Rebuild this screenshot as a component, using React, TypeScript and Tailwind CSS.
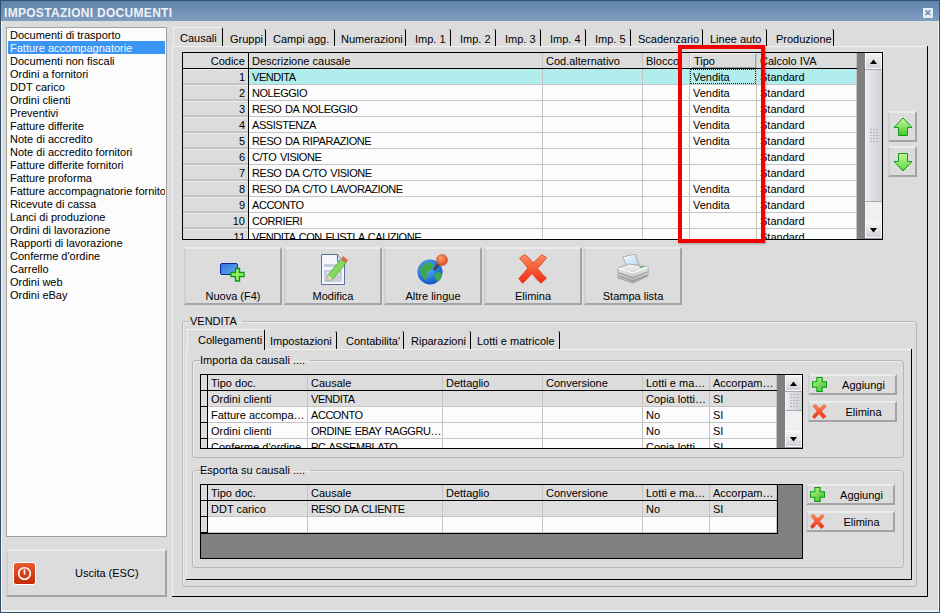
import type { ReactNode } from "react"

const docs = [
  "Documenti di trasporto",
  "Fatture accompagnatorie",
  "Documenti non fiscali",
  "Ordini a fornitori",
  "DDT carico",
  "Ordini clienti",
  "Preventivi",
  "Fatture differite",
  "Note di accredito",
  "Note di accredito fornitori",
  "Fatture differite fornitori",
  "Fatture proforma",
  "Fatture accompagnatorie fornitori",
  "Ricevute di cassa",
  "Lanci di produzione",
  "Ordini di lavorazione",
  "Rapporti di lavorazione",
  "Conferme d'ordine",
  "Carrello",
  "Ordini web",
  "Ordini eBay"
]

const topTabs = [
  { label: "Causali", w: "w-[50px]", pl: "pl-[6px]" },
  { label: "Gruppi", w: "w-[43px]", pl: "pl-[7px]" },
  { label: "Campi agg.", w: "w-[69px]", pl: "pl-[7px]" },
  { label: "Numerazioni", w: "w-[71px]", pl: "pl-[6px]" },
  { label: "Imp. 1", w: "w-[45px]", pl: "pl-[9px]" },
  { label: "Imp. 2", w: "w-[45px]", pl: "pl-[9px]" },
  { label: "Imp. 3", w: "w-[45px]", pl: "pl-[9px]" },
  { label: "Imp. 4", w: "w-[45px]", pl: "pl-[9px]" },
  { label: "Imp. 5", w: "w-[45px]", pl: "pl-[9px]" },
  { label: "Scadenzario", w: "w-[72px]", pl: "pl-[7px]" },
  { label: "Linee auto", w: "w-[64px]", pl: "pl-[7px]" },
  { label: "Produzione", w: "w-[67px]", pl: "pl-[9px]" }
]

const innerTabs = [
  { label: "Collegamenti", w: "w-[78px]", pl: "pl-[10px]" },
  { label: "Impostazioni", w: "w-[72px]", pl: "pl-[5px]" },
  { label: "Contabilita'", w: "w-[67px]", pl: "pl-[9px]" },
  { label: "Riparazioni", w: "w-[67px]", pl: "pl-[7px]" },
  { label: "Lotti e matricole", w: "w-[89px]", pl: "pl-[6px]" }
]

const mainCols = [
  { label: "Codice", w: "w-[66px]" },
  { label: "Descrizione causale", w: "w-[294px]" },
  { label: "Cod.alternativo", w: "w-[100px]" },
  { label: "Blocco", w: "w-[47px]" },
  { label: "Tipo", w: "w-[67px]" },
  { label: "Calcolo IVA", w: "w-[100px]" }
]

const mainRows = [
  ["1", "VENDITA", "", "", "Vendita", "Standard"],
  ["2", "NOLEGGIO", "", "", "Vendita", "Standard"],
  ["3", "RESO DA NOLEGGIO", "", "", "Vendita", "Standard"],
  ["4", "ASSISTENZA", "", "", "Vendita", "Standard"],
  ["5", "RESO DA RIPARAZIONE", "", "", "Vendita", "Standard"],
  ["6", "C/TO VISIONE", "", "", "", "Standard"],
  ["7", "RESO DA C/TO VISIONE", "", "", "", "Standard"],
  ["8", "RESO DA C/TO LAVORAZIONE", "", "", "Vendita", "Standard"],
  ["9", "ACCONTO", "", "", "Vendita", "Standard"],
  ["10", "CORRIERI", "", "", "", "Standard"],
  ["11", "VENDITA CON FUSTI A CAUZIONE", "", "", "", "Standard"]
]

const linkCols = [
  { label: "", w: "w-[7px]" },
  { label: "Tipo doc.", w: "w-[100px]" },
  { label: "Causale", w: "w-[135px]" },
  { label: "Dettaglio", w: "w-[100px]" },
  { label: "Conversione", w: "w-[100px]" },
  { label: "Lotti e ma…", w: "w-[67px]" },
  { label: "Accorpam…", w: "w-[67px]" }
]

const importRows = [
  ["", "Ordini clienti", "VENDITA", "", "", "Copia lotti…", "SI"],
  ["", "Fatture accompa…", "ACCONTO", "", "", "No", "SI"],
  ["", "Ordini clienti", "ORDINE EBAY RAGGRU…", "", "", "No", "SI"],
  ["", "Conferme d'ordine", "PC ASSEMBLATO", "", "", "Copia lotti…", "SI"]
]

const exportRows = [
  ["", "DDT carico", "RESO DA CLIENTE", "", "", "No", "SI"],
  ["", "", "", "", "", "", ""]
]

// Capitals run narrower in the original UI font
const isCaps = (s: string) => s.length > 2 && s === s.toUpperCase()

function Grid({
  cols,
  rows,
  firstRowBg,
  numbered,
  focusCol
}: {
  cols: { label: string; w: string }[]
  rows: string[][]
  firstRowBg: string
  numbered?: boolean
  focusCol?: number
}) {
  return (
    <div className="flex flex-col">
      <div className="flex h-4 border-b border-black bg-[#dcdcdc]">
        {cols.map((c, i) => (
          <div
            key={i}
            className={`${c.w} flex-none overflow-hidden whitespace-nowrap ${
              i === 0 ? "border-r border-black pr-[3px] text-right" : "border-r border-[#c4c4c4] pl-[3px]"
            } ${
              focusCol === i
                ? "border-l border-t border-l-[#f4f4f4] border-t-[#f4f4f4] leading-[14px] shadow-[inset_-1px_-1px_0_#a0a0a0]"
                : "leading-[16px]"
            }`}
          >
            {c.label}
          </div>
        ))}
      </div>
      {rows.map((r, ri) => (
        <div key={ri} className={`flex h-4 flex-none ${ri === 0 ? firstRowBg : "bg-[#fcfcfc]"}`}>
          {cols.map((c, i) => (
            <div
              key={i}
              className={`${c.w} flex-none overflow-hidden whitespace-nowrap leading-[16px] ${
                isCaps(r[i]) ? "tracking-[-0.45px] [word-spacing:1px]" : ""
              } ${
                i === 0
                  ? `border-r border-black bg-[#dcdcdc] pr-[3px] text-right ${
                      numbered ? "shadow-[inset_0_1px_0_#ececec,inset_0_-2px_0_#c4c4c4]" : "border-b border-[#c0c0c0]"
                    }`
                  : "border-b border-r border-[#c4c4c4] pl-[3px]"
              }`}
            >
              {focusCol === i && ri === 0 ? (
                <span className="-ml-[3px] block h-[15px] border border-dotted border-[#222] pl-[2px] leading-[14px]">
                  {r[i]}
                </span>
              ) : (
                r[i]
              )}
            </div>
          ))}
        </div>
      ))}
    </div>
  )
}

function ScrollArrow({ down }: { down?: boolean }) {
  return (
    <div className="flex h-4 flex-none items-center justify-center rounded-[1px] border border-[#fafafa] bg-gradient-to-b from-[#f2f2f4] to-[#d2d2d8] shadow-[0_1px_0_#909090]">
      <svg width="9" height="5" viewBox="0 0 9 5">
        <path d={down ? "M1 0h7L4.5 4.5z" : "M4.5 0.5L8 5H1z"} fill="#000" />
      </svg>
    </div>
  )
}

function Grip() {
  return (
    <div className="grid grid-cols-3 gap-x-[1px] gap-y-[2px]">
      {Array.from({ length: 15 }).map((_, i) => (
        <span key={i} className="h-[1px] w-[2px] bg-[#b4b4bc]" />
      ))}
    </div>
  )
}

function Scrollbar({ thumb, track, gripPos }: { thumb: string; track: string; gripPos: string }) {
  return (
    <div className="flex h-full w-[17px] flex-none flex-col bg-[#f0f0f2]">
      <ScrollArrow />
      <div
        className={`${thumb} flex flex-none flex-col items-center overflow-hidden rounded-[1px] border-y border-[#a8a8ac] bg-gradient-to-r from-[#eeeef2] via-[#dcdce2] to-[#cfcfd6] ${gripPos}`}
      >
        <Grip />
      </div>
      <div className={`${track} flex-none bg-[#f0f0f2]`} />
      <ScrollArrow down />
    </div>
  )
}

function Tab({ label, w, pl, active }: { label: string; w: string; pl: string; active?: boolean }) {
  return (
    <div
      className={`${w} ${pl} flex-none whitespace-nowrap rounded-tr-[2px] border-r border-black ${
        active
          ? "mb-[-1px] border-l border-t border-l-[#f0f0f0] border-t-[#f0f0f0] bg-[#dcdcdc] leading-[20px]"
          : "mt-[2px] leading-[21px]"
      }`}
    >
      {label}
    </div>
  )
}

function Group({ title, className, children }: { title: string; className: string; children: ReactNode }) {
  return (
    <fieldset className={`${className} rounded-[3px] border border-[#b8b8b8] shadow-[inset_1px_1px_0_#ececec]`}>
      <legend className="ml-[7px] h-[13px] px-0 pr-[5px] leading-[13px]">{title}</legend>
      {children}
    </fieldset>
  )
}

function RaisedButton({ className, children }: { className: string; children: ReactNode }) {
  return (
    <div
      className={`${className} border-2 border-b-[#a4a4a4] border-l-[#d0d0d0] border-r-[#a4a4a4] border-t-[#ececec] bg-[#dcdcdc]`}
    >
      {children}
    </div>
  )
}

function PlusIcon({ size = 14 }: { size?: number }) {
  return (
    <svg width={size} height={size} viewBox="0 0 14 14">
      <defs>
        <linearGradient id="plusg" x1="0" y1="0" x2="1" y2="1">
          <stop offset="0" stopColor="#b8f58a" />
          <stop offset="1" stopColor="#3fc02a" />
        </linearGradient>
      </defs>
      <path d="M4.5.5h5v4h4v5h-4v4h-5v-4h-4v-5h4z" fill="url(#plusg)" stroke="#0a9a14" />
    </svg>
  )
}

function CrossIcon({ size = 14 }: { size?: number }) {
  return (
    <svg width={size} height={size} viewBox="0 0 40 40">
      <defs>
        <linearGradient id="crossg" x1="0" y1="0" x2="0" y2="1">
          <stop offset="0" stopColor="#ff8a5c" />
          <stop offset="1" stopColor="#f02a10" />
        </linearGradient>
      </defs>
      <path
        d="M8 1c4 1 7 4 12 11 5-4 8-8 12-11l6 4c-3 4-7 9-12 14 4 5 8 10 12 13l-7 7c-4-3-8-7-12-13-5 5-9 10-13 13l-5-6c3-4 8-9 12-14C9 13 5 9 2 6z"
        fill="url(#crossg)"
        stroke="#d83818"
        strokeWidth="1"
      />
    </svg>
  )
}

function NewIcon() {
  return (
    <svg width="26" height="20" viewBox="0 0 26 20">
      <defs>
        <linearGradient id="newb" x1="0" y1="0" x2="1" y2="1">
          <stop offset="0" stopColor="#2f74dc" />
          <stop offset="1" stopColor="#6ea8f0" />
        </linearGradient>
      </defs>
      <rect x=".5" y=".5" width="17" height="11" rx="1.5" fill="url(#newb)" stroke="#0d2a9c" />
      <path
        d="M15.500 5.500h4v4h4.500v4h-4.500v4.500h-4v-4.500h-4.500v-4h4.500z"
        fill="#9cf06c"
        stroke="#0a9a14"
        strokeWidth="1.400"
      />
    </svg>
  )
}

function EditIcon() {
  return (
    <svg width="28" height="31" viewBox="0 0 28 31">
      <path d="M.5.5h16l7 7v23h-23z" fill="#f4f6fb" stroke="#5a6ea0" />
      <path d="M16.500.5v7h7" fill="#cfd8ee" stroke="#5a6ea0" />
      <rect x="3" y="10" width="17" height="3" fill="#c4cce0" />
      <rect x="3" y="16" width="18" height="12" fill="#c7cede" />
      <rect x="6" y="18" width="12" height="3" fill="#e4e8f2" />
      <path d="M7 21L20 5l5 4-13 16-6 2z" fill="#86d860" stroke="#4ca83a" strokeWidth=".8" />
      <path d="M20 5l2-3 5 4-2 3z" fill="#e46a52" />
      <path d="M7 21l5 4-6 2z" fill="#e8d4b8" />
    </svg>
  )
}

function GlobeIcon() {
  return (
    <svg width="32" height="31" viewBox="0 0 32 31">
      <defs>
        <radialGradient id="globe" cx=".4" cy=".35" r=".7">
          <stop offset="0" stopColor="#5bb4ff" />
          <stop offset="1" stopColor="#0d4fc4" />
        </radialGradient>
        <radialGradient id="pin" cx=".4" cy=".35" r=".7">
          <stop offset="0" stopColor="#f8a070" />
          <stop offset="1" stopColor="#d84a20" />
        </radialGradient>
      </defs>
      <circle cx="13" cy="18" r="12.500" fill="url(#globe)" />
      <path d="M3 14l7-6 6 2-1 6-5 2 1 6-3 2-4-6zM17 20l5-2 3 2-2 6-4 1z" fill="#3fa84a" />
      <path d="M17 16l6-8" stroke="#44444c" strokeWidth="3" />
      <circle cx="25" cy="6" r="5.500" fill="url(#pin)" stroke="#d85428" strokeWidth=".6" />
    </svg>
  )
}

function PrinterIcon() {
  return (
    <svg width="32" height="30" viewBox="0 0 32 30">
      <defs>
        <linearGradient id="paper" x1="0" y1="0" x2="1" y2="1">
          <stop offset="0" stopColor="#ffffff" />
          <stop offset="1" stopColor="#a8d0f4" />
        </linearGradient>
        <linearGradient id="body" x1="0" y1="0" x2="0" y2="1">
          <stop offset="0" stopColor="#f6f6f6" />
          <stop offset="1" stopColor="#b4b4b4" />
        </linearGradient>
      </defs>
      <path d="M6 3l12-3 4 11-11 4z" fill="url(#paper)" stroke="#8a8a8a" strokeWidth=".6" />
      <path d="M1 14l11-4 19 3v9l-15 7-15-5z" fill="url(#body)" stroke="#8c8c8c" strokeWidth=".7" />
      <path d="M1 14l15 5 15-6" fill="none" stroke="#ffffff" />
      <path d="M2 19l14 5 14-6M2 22l14 5 14-6" fill="none" stroke="#7c7c7c" strokeWidth=".8" />
      <path d="M22 13l4-1 1 1-4 1z" fill="#42b04a" />
    </svg>
  )
}

function ArrowIcon({ down }: { down?: boolean }) {
  return (
    <svg width="20" height="20" viewBox="0 0 20 20" className={down ? "rotate-180" : ""}>
      <defs>
        <linearGradient id={down ? "arrd" : "arru"} x1="0" y1="0" x2="0" y2="1">
          <stop offset="0" stopColor={down ? "#58d83a" : "#d4fca8"} />
          <stop offset="1" stopColor={down ? "#c8f89c" : "#40c828"} />
        </linearGradient>
      </defs>
      <path d="M10 1l9 9.500h-4.500v8h-9v-8H1z" fill={`url(#${down ? "arrd" : "arru"})`} stroke="#179a18" />
    </svg>
  )
}

function PowerIcon() {
  return (
    <div className="flex h-[23px] w-[23px] items-center justify-center rounded-[3px] border border-white bg-gradient-to-b from-[#e85a30] to-[#c42a08]">
      <svg width="15" height="15" viewBox="0 0 15 15">
        <circle cx="7.500" cy="7.500" r="5.800" fill="none" stroke="#fff" strokeWidth="1.600" />
        <rect x="6.700" y="3.500" width="1.600" height="5" fill="#fff" />
      </svg>
    </div>
  )
}

function ToolButton({ icon, label, iconClass }: { icon: ReactNode; label: string; iconClass: string }) {
  return (
    <RaisedButton className="flex h-[58px] w-[98px] flex-none flex-col items-center">
      <div className={`flex h-[37px] flex-none items-start justify-center ${iconClass}`}>{icon}</div>
      <div className="mt-[4px] whitespace-nowrap leading-[13px]">{label}</div>
    </RaisedButton>
  )
}

function SideButton({ icon, label }: { icon: ReactNode; label: string }) {
  return (
    <RaisedButton className="flex h-[21px] w-[89px] items-center pl-[2px]">
      <span className="w-[20px] flex-none">{icon}</span>
      <span className="flex-1 text-center leading-[14px]">{label}</span>
    </RaisedButton>
  )
}

function SideButtons() {
  return (
    <div className="flex flex-col gap-[6px]">
      <SideButton icon={<PlusIcon size={15} />} label="Aggiungi" />
      <SideButton icon={<CrossIcon size={15} />} label="Elimina" />
    </div>
  )
}

export default function App() {
  return (
    <div className="relative flex h-[613px] w-[940px] flex-col overflow-hidden border border-[#34506e] bg-[#dcdcdc] font-['Liberation_Sans',sans-serif] text-[11px] text-black shadow-[inset_0_-2px_0_#f2f2f2,inset_-1px_0_0_#f2f2f2,inset_1px_0_0_#f2f2f2]">
      <div className="flex h-[20px] flex-none items-center justify-between bg-gradient-to-b from-[#5f83aa] to-[#7f9dbf] pl-[3px] pr-[6px] pt-[4px]">
        <span className="text-[12px] font-bold tracking-[.3px] text-[#eef2f8]">IMPOSTAZIONI DOCUMENTI</span>
        <span className="flex h-[10px] w-[10px] items-center justify-center bg-[#e8eef6] text-[9px] font-bold leading-none text-[#5f83aa]">
          ✕
        </span>
      </div>

      <div className="flex flex-1 pl-[5px] pt-[6px]">
        <div className="flex w-[161px] flex-none flex-col">
          <div className="h-[510px] overflow-hidden border border-[#a0a0a0] bg-[#fcfcfc] px-[1px] leading-[14px]">
            {docs.map((d) => (
              <div
                key={d}
                className={`h-[13px] overflow-hidden whitespace-nowrap pl-[2px] ${
                  d === "Fatture accompagnatorie" ? "bg-[#3a96f2] text-[#f4f8ff]" : ""
                }`}
              >
                {d}
              </div>
            ))}
          </div>
          <RaisedButton className="mt-[12px] flex h-[48px] items-center pl-[5px]">
            <PowerIcon />
            <span className="ml-[39px]">Uscita (ESC)</span>
          </RaisedButton>
        </div>

        <div className="ml-[5px] flex w-[756px] flex-none flex-col">
          <div className="flex h-[19px] flex-none pl-[1px]">
            {topTabs.map((t, i) => (
              <Tab key={t.label} {...t} active={i === 0} />
            ))}
          </div>

          <div className="h-[551px] flex-none border-b border-r border-black pl-[10px] pt-[6px] shadow-[inset_1px_1px_0_#f0f0f0]">
            <div className="flex">
              <div className="flex h-[188px] w-[701px] flex-none overflow-hidden border border-black bg-[#808080]">
                <div className="w-[674px] flex-none overflow-hidden">
                  <Grid cols={mainCols} rows={mainRows} firstRowBg="bg-[#b2eded]" numbered focusCol={4} />
                </div>
                <div className="w-[8px] flex-none" />
                <Scrollbar thumb="h-[133px]" track="h-[20px]" gripPos="justify-center" />
              </div>
              <div className="ml-[5px] mt-[59px] flex flex-col gap-[4px]">
                <RaisedButton className="flex h-[31px] w-[29px] items-center justify-center">
                  <ArrowIcon />
                </RaisedButton>
                <RaisedButton className="flex h-[31px] w-[29px] items-center justify-center">
                  <ArrowIcon down />
                </RaisedButton>
              </div>
            </div>

            <div className="ml-[2px] mt-[7px] flex gap-[2px]">
              <ToolButton icon={<NewIcon />} label="Nuova (F4)" iconClass="pt-[14px]" />
              <ToolButton icon={<EditIcon />} label="Modifica" iconClass="pl-[4px] pt-[5px]" />
              <ToolButton icon={<GlobeIcon />} label="Altre lingue" iconClass="pt-[5px]" />
              <ToolButton icon={<CrossIcon size={30} />} label="Elimina" iconClass="pt-[5px]" />
              <ToolButton icon={<PrinterIcon />} label="Stampa lista" iconClass="pt-[5px]" />
            </div>

            <Group title="VENDITA" className="mt-[10px] h-[272px] w-[735px]">
              <div className="pl-[3px] pt-[1px]">
                <div className="flex h-[20px] pl-[1px]">
                  {innerTabs.map((t, i) => (
                    <Tab key={t.label} {...t} active={i === 0} />
                  ))}
                </div>
                <div className="h-[231px] w-[726px] border-b border-r border-black pl-[6px] pt-[5px] shadow-[inset_1px_1px_0_#f0f0f0]">
                  <Group title="Importa da causali ...." className="h-[104px] w-[712px]">
                    <div className="ml-[7px] mt-[7px] flex">
                      <div className="flex h-[75px] w-[603px] flex-none overflow-hidden border border-black bg-[#808080]">
                        <div className="w-[576px] flex-none overflow-hidden">
                          <Grid cols={linkCols} rows={importRows} firstRowBg="bg-[#dedede]" />
                        </div>
                        <div className="w-[8px] flex-none" />
                        <Scrollbar thumb="h-[20px]" track="h-[20px]" gripPos="justify-start pt-[2px]" />
                      </div>
                      <div className="ml-[5px]">
                        <SideButtons />
                      </div>
                    </div>
                  </Group>
                  <Group title="Esporta su causali ...." className="mt-[6px] h-[104px] w-[712px]">
                    <div className="ml-[7px] mt-[7px] flex">
                      <div className="h-[75px] w-[603px] flex-none overflow-hidden border border-black bg-[#808080]">
                        <div className="w-[577px] border-b border-r border-black">
                          <Grid cols={linkCols} rows={exportRows} firstRowBg="bg-[#dedede]" />
                        </div>
                      </div>
                      <div className="ml-[3px]">
                        <SideButtons />
                      </div>
                    </div>
                  </Group>
                </div>
              </div>
            </Group>
          </div>
        </div>
      </div>

      {/* highlight drawn over the grid */}
      <div className="absolute left-[677px] top-[44px] h-[198px] w-[87px] border-4 border-[#f00000] shadow-[1px_1px_2px_rgba(0,0,0,.3)]" />
    </div>
  )
}
